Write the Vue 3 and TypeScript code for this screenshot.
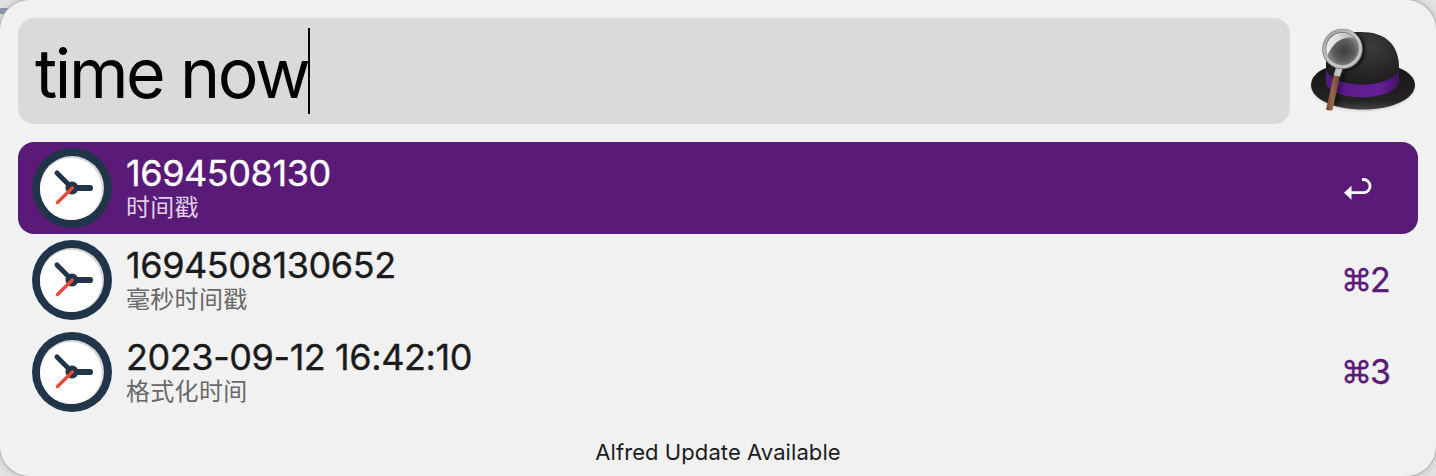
<script setup lang="ts">
interface Result {
  title: string
  subtitle: string
  shortcut?: string
}

const query = 'time now'
const results: Result[] = [
  { title: '1694508130', subtitle: '时间戳' },
  { title: '1694508130652', subtitle: '毫秒时间戳', shortcut: '2' },
  { title: '2023-09-12 16:42:10', subtitle: '格式化时间', shortcut: '3' },
]
</script>

<template>
  <div class="desktop">
    <div class="strip"></div>
    <main class="panel">
      <header class="top">
        <div class="search"><span class="query">{{ query }}</span><span class="caret"></span></div>
        <svg class="hat" viewBox="0 0 120 100" width="120" height="100">
          <defs>
            <radialGradient id="crown" cx=".6" cy=".25" r=".75">
              <stop offset="0" stop-color="#3d3b3c" />
              <stop offset=".6" stop-color="#272526" />
              <stop offset="1" stop-color="#1b191a" />
            </radialGradient>
            <linearGradient id="brim" x1="0" y1="0" x2="0" y2="1">
              <stop offset="0" stop-color="#171617" />
              <stop offset=".8" stop-color="#252324" />
              <stop offset="1" stop-color="#454344" />
            </linearGradient>
            <linearGradient id="band" x1="0" y1="0" x2="1" y2="0">
              <stop offset="0" stop-color="#54197c" />
              <stop offset=".2" stop-color="#5d1b8c" />
              <stop offset=".75" stop-color="#651f97" />
              <stop offset="1" stop-color="#42115f" />
            </linearGradient>
            <radialGradient id="lens" cx=".54" cy=".56" r=".56">
              <stop offset="0" stop-color="#3f3e3f" />
              <stop offset=".5" stop-color="#5c5b5c" />
              <stop offset="1" stop-color="#a0a0a0" />
            </radialGradient>
            <linearGradient id="glare" x1="0" y1="1" x2="1" y2="0">
              <stop offset="0" stop-color="#fff" stop-opacity=".9" />
              <stop offset=".6" stop-color="#fff" stop-opacity=".75" />
              <stop offset="1" stop-color="#fff" stop-opacity=".2" />
            </linearGradient>
            <linearGradient id="rim" x1="0" y1="0" x2="1" y2="1">
              <stop offset="0" stop-color="#98999b" />
              <stop offset=".45" stop-color="#c4c5c6" />
              <stop offset="1" stop-color="#bfc1c2" />
            </linearGradient>
            <linearGradient id="handle" x1="0" y1="0" x2="1" y2="0">
              <stop offset="0" stop-color="#6b4530" />
              <stop offset=".45" stop-color="#9a6a4a" />
              <stop offset="1" stop-color="#69442c" />
            </linearGradient>
            <filter id="soft" x="-30%" y="-30%" width="160%" height="160%">
              <feGaussianBlur stdDeviation="1.600" />
            </filter>
            <clipPath id="hatShape">
              <path d="M20 54C21 28 30 18 53 18c25 0 39 12 40 36 10 4 16 10 16 17 0 14-23 25-52 25S5 85 5 71c0-8 6-14 15-17Z" />
            </clipPath>
          </defs>
          <ellipse cx="57" cy="73.500" rx="51" ry="23" fill="#777" opacity=".35" filter="url(#soft)" />
          <path d="M20 54C10 58 5 64 5 71c0 14 23 24.500 52 24.500S109 85 109 71c0-7-6-13-16-17Z" fill="url(#brim)" />
          <path d="M20 66V50C21 27 32 18 55 18c25 0 38 13 38 36v12c-10 14-60 18-73 0Z" fill="url(#crown)" />
          <path d="M20 56c9 19 63 20 73 0v14c-10 17-62 18-73 1Z" fill="url(#band)" />
          <g clip-path="url(#hatShape)">
            <circle cx="39.500" cy="36" r="20" fill="#000" opacity=".6" filter="url(#soft)" />
            <path d="m35 60-9 38h4l11-41Z" fill="#000" opacity=".35" filter="url(#soft)" />
          </g>
          <path d="m28 61 5.800 1-7.300 34.300q-3.400.8-6.500-.7Z" fill="url(#handle)" />
          <path d="m30 53 6.800 1-2.800 8.400-6.300-1Z" fill="url(#rim)" />
          <circle cx="36.300" cy="34.600" r="18" fill="url(#lens)" />
          <path d="M21 42C17 27 28 17 40 18.500c5 .5 9 3 11 5.500-13-2-22 1-30 18Z" fill="url(#glare)" />
          <circle cx="36.500" cy="35" r="18.300" fill="none" stroke="#727475" stroke-width="4" />
          <circle cx="36.300" cy="34.600" r="18.100" fill="none" stroke="url(#rim)" stroke-width="3" />
        </svg>
      </header>

      <ul class="results">
        <li v-for="(item, i) in results" :key="item.title" class="row" :class="{ selected: i === 0 }">
          <svg class="clock" viewBox="0 0 80 80" width="80" height="80">
            <circle cx="40" cy="40" r="40" fill="#20354a" />
            <circle cx="40" cy="40" r="32" fill="#d5d5d6" />
            <circle cx="39" cy="41" r="31" fill="#fff" />
            <path d="M25 25 40 40" fill="none" stroke="#20354a" stroke-linecap="round" stroke-width="5" />
            <path d="M41 40H58" fill="none" stroke="#20354a" stroke-linecap="round" stroke-width="6.200" />
            <circle cx="40" cy="40" r="6.500" fill="#20354a" />
            <path d="M40.300 40 25.500 54.500" fill="none" stroke="#e84b3c" stroke-linecap="round" stroke-width="3.400" />
          </svg>
          <div class="text">
            <div class="title">{{ item.title }}</div>
            <div class="subtitle">{{ item.subtitle }}</div>
          </div>
          <div v-if="item.shortcut" class="shortcut"><span class="command">⌘</span><span>{{ item.shortcut }}</span></div>
          <svg v-else class="enter" viewBox="0 0 30 24" width="30" height="24">
            <path d="M18 3.500h1.500a6 6 0 0 1 0 13.200H7" fill="none" stroke="#fff" stroke-width="2.800" />
            <path d="m0 16.700 7.500-7v14Z" fill="#fff" />
          </svg>
        </li>
      </ul>
      <footer class="update">Alfred Update Available</footer>
    </main>
  </div>
</template>

<style>
body {
  margin: 0;
  overflow: hidden;
}
</style>

<style scoped>
.desktop {
  position: relative;
  box-sizing: border-box;
  width: 1436px;
  height: 476px;
  overflow: hidden;
  background: #e2e2e2;
  font-family: Inter, "Noto Sans CJK SC", sans-serif;
}
.strip {
  position: absolute;
  top: 8px;
  left: 0;
  width: 20px;
  height: 6px;
  background: #8e9aae;
}
.panel {
  position: relative;
  box-sizing: border-box;
  height: 476px;
  padding: 18px 18px 0;
  border-radius: 30px;
  background: #f1f1f1;
  box-shadow: 0 0 0 1px #b5b5b5, 0 0 8px #0003;
}
.top {
  display: flex;
  height: 106px;
}
.search {
  display: flex;
  flex: none;
  align-items: center;
  box-sizing: border-box;
  width: 1272px;
  height: 106px;
  padding-left: 17px;
  border-radius: 16px;
  background: #dadada;
}
.query {
  padding-top: 3px;
  color: #000;
  font-size: 68px;
  line-height: 106px;
  letter-spacing: -2.4px;
  white-space: pre;
}
.caret {
  width: 2px;
  height: 86px;
  background: #000;
}
.hat {
  flex: none;
  margin-left: 16px;
  margin-top: -4px;
}
.results {
  margin: 18px 0 0;
  padding: 0;
  list-style: none;
}
.row {
  display: flex;
  align-items: center;
  box-sizing: border-box;
  height: 92px;
  padding-left: 14px;
  border-radius: 16px;
  color: #1b1b1b;
}
.selected {
  background: #5a1a77;
  color: #fff;
}
.clock {
  flex: none;
}
.text {
  flex: 1;
  margin-left: 14px;
}
.title {
  height: 40px;
  font-size: 36px;
  line-height: 40px;
  letter-spacing: -0.42px;
  -webkit-text-stroke: 0.35px currentColor;
}
.subtitle {
  height: 30px;
  color: #686868;
  font-size: 24px;
  line-height: 30px;
  letter-spacing: 0.3px;
}
.selected .subtitle {
  color: #decfe4;
}
.shortcut {
  display: flex;
  width: 77px;
  color: #5a1a77;
  font-size: 34px;
  line-height: 40px;
  -webkit-text-stroke: 0.35px currentColor;
}
.command {
  font-size: 31px;
  letter-spacing: -2px;
}
.enter {
  margin-right: 44px;
}
.update {
  margin-top: 14px;
  color: #1d1d1d;
  font-size: 22px;
  line-height: 40px;
  letter-spacing: 0.08px;
  text-align: center;
}
</style>
